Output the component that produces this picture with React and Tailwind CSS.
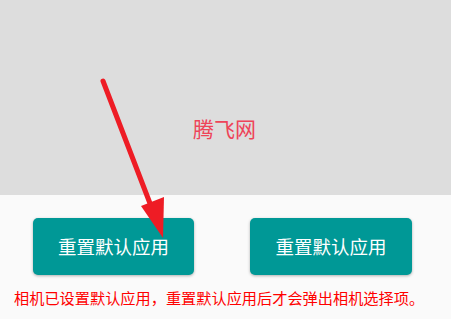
export default function App() {
  return (
    <div
      className="relative w-[451px] h-[319px] bg-[#fafafa] overflow-hidden"
      style={{ fontFamily: '"Noto Sans CJK SC", "Noto Sans", sans-serif' }}
    >
      {/* preview area */}
      <div className="relative h-[195px] bg-[#dddddd]">
        <span className="absolute left-[193px] top-[118px] text-[21px] leading-[21px] text-[#ee4458]">
          腾飞网
        </span>
      </div>

      <div className="flex gap-[56px] pl-[33px] pt-[23px]">
        <button className="w-[161px] h-[57px] rounded-[5px] bg-[#009896] text-white text-[18.5px] shadow-[0_1px_3px_rgba(0,0,0,0.3)]">
          重置默认应用
        </button>
        <button className="w-[162px] h-[57px] rounded-[5px] bg-[#009896] text-white text-[18.5px] shadow-[0_1px_3px_rgba(0,0,0,0.3)]">
          重置默认应用
        </button>
      </div>

      <p className="pl-[14px] pt-[12px] text-[15.2px] leading-[20px] text-[#ff0000] whitespace-nowrap">
        相机已设置默认应用，重置默认应用后才会弹出相机选择项。
      </p>

      {/* annotation arrow */}
      <svg className="absolute inset-0" width="451" height="319" viewBox="0 0 451 319">
        <line x1="103" y1="81" x2="151" y2="206" stroke="#ee1c25" strokeWidth="5" strokeLinecap="round" />
        <polygon points="141,206 164,197 163,238" fill="#ee1c25" />
      </svg>
    </div>
  );
}
